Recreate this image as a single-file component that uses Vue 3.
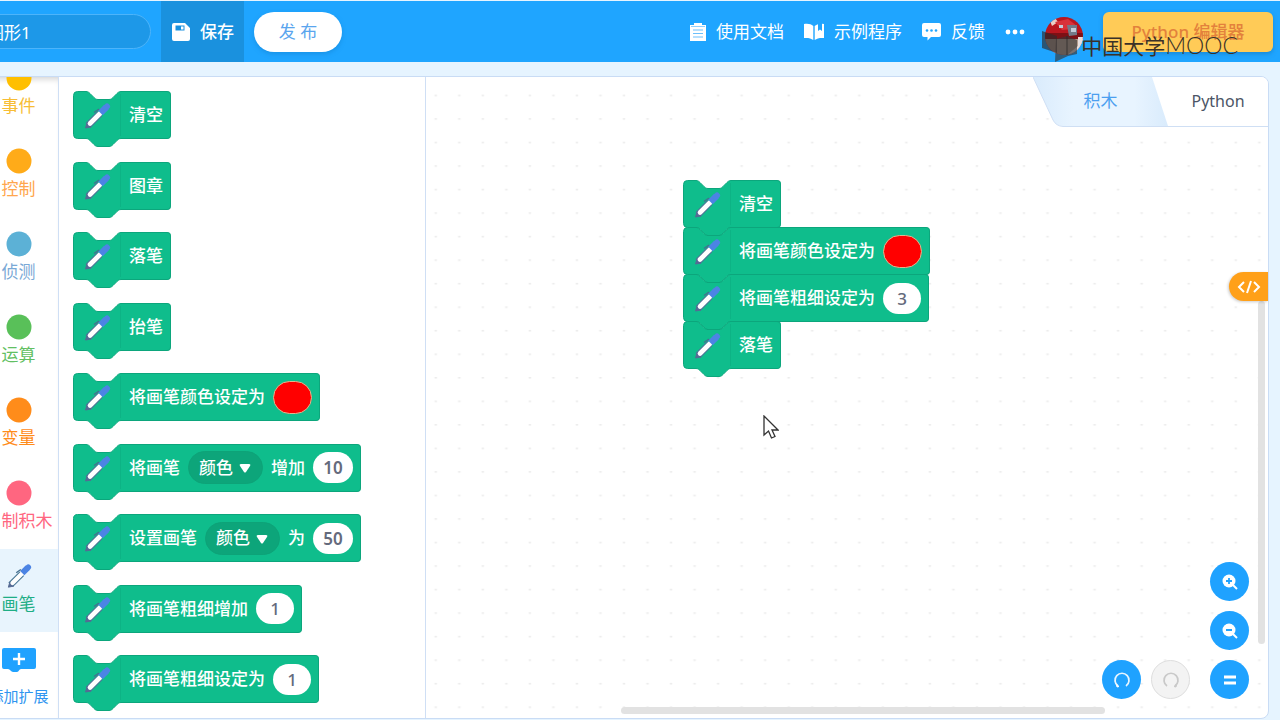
<script setup>
import { ref } from 'vue'

const projectName = ref('图形1')

const categories = [
  { name: '事件', color: '#ffbf00', text: '#f7bd35' },
  { name: '控制', color: '#ffab19', text: '#ffa64d' },
  { name: '侦测', color: '#5cb1d6', text: '#7aa9d6' },
  { name: '运算', color: '#59c059', text: '#62bf62' },
  { name: '变量', color: '#ff8c1a', text: '#ff8c1a' },
  { name: '自制积木', color: '#ff6680', text: '#ff6680' },
  { name: '画笔', pen: true, text: '#1fae86' }
]

const palette = [
  [{ t: '清空' }],
  [{ t: '图章' }],
  [{ t: '落笔' }],
  [{ t: '抬笔' }],
  [{ t: '将画笔颜色设定为' }, { color: '#ff0000' }],
  [{ t: '将画笔' }, { select: '颜色' }, { t: '增加' }, { n: '10' }],
  [{ t: '设置画笔' }, { select: '颜色' }, { t: '为' }, { n: '50' }],
  [{ t: '将画笔粗细增加' }, { n: '1' }],
  [{ t: '将画笔粗细设定为' }, { n: '1' }]
]

const script = [
  [{ t: '清空' }],
  [{ t: '将画笔颜色设定为' }, { color: '#ff0000' }],
  [{ t: '将画笔粗细设定为' }, { n: '3' }],
  [{ t: '落笔' }]
]

const groups = [
  { cls: 'palette', blocks: palette },
  { cls: 'stack', blocks: script }
]
</script>

<template>
  <div class="app">
    <svg class="defs" aria-hidden="true">
      <symbol id="pen" viewBox="0 0 28 28">
        <path d="M5 23.500 17 11.500" stroke="#4a7896" stroke-width="7" />
        <path d="m2.500 26 1.500-5 4 4z" fill="#566a94" stroke="#566a94" />
        <path d="M7 21.500 17 11.500" stroke="#fff" stroke-width="4.600" stroke-linecap="round" />
        <path d="M17.500 11 23.500 5" stroke="#4c84e4" stroke-width="6.500" />
        <path d="M22.500 6 24 4.500" stroke="#4c84e4" stroke-width="6" stroke-linecap="round" />
        <path d="m11 10.500 5-3.500" stroke="#45708f" stroke-width="1.500" />
      </symbol>
    </svg>

    <header class="bar">
      <input v-model="projectName" class="name" type="text" aria-label="项目名称" />
      <button class="save" type="button">
        <svg width="18" height="18" viewBox="0 0 18 18">
          <path fill-rule="evenodd" fill="#fff" d="M2 0h11l5 5v11a2 2 0 0 1-2 2H2a2 2 0 0 1-2-2V2a2 2 0 0 1 2-2zM3.500 2.500v5h9v-5zM9 3.500h2.500v3H9z" />
        </svg>
        <span>保存</span>
      </button>
      <button class="publish" type="button">发 布</button>
      <nav class="links">
        <a href="#docs">
          <svg width="16" height="18" viewBox="0 0 16 18">
            <path fill="#fff" d="M0 2h16v16H0zM4 0h8v3H4z" />
            <path d="M3 7h10M3 10.500h10M3 14h10" stroke="#6cc0fb" stroke-width="1.200" />
            <path d="M1 3.500h14" stroke="#8fd0ff" />
          </svg>
          <span>使用文档</span>
        </a>
        <a href="#examples">
          <svg width="20" height="18" viewBox="0 0 20 18">
            <path fill="#fff" d="M0 1c4-.8 7 0 9.300 2v14C7 15.200 4 14.700 0 15zM20 1v14c-4-.3-7 .2-9.300 2V3c1-.9 2-1.400 3.300-1.800V8l2-1.500L18 8V.8z" />
          </svg>
          <span>示例程序</span>
        </a>
        <a href="#feedback">
          <svg width="19" height="18" viewBox="0 0 19 18">
            <path fill="#fff" d="M2 0h15a2 2 0 0 1 2 2v10a2 2 0 0 1-2 2H9l-3.500 3.500V14H2a2 2 0 0 1-2-2V2a2 2 0 0 1 2-2z" />
            <g fill="#1fa5ff"><circle cx="5" cy="7.500" r="1.300" /><circle cx="9.500" cy="7.500" r="1.300" /><circle cx="14" cy="7.500" r="1.300" /></g>
          </svg>
          <span>反馈</span>
        </a>
      </nav>
      <button class="more" type="button" aria-label="更多">
        <svg width="20" height="6" viewBox="0 0 20 6" fill="#fff"><circle cx="3" cy="3" r="2.400" /><circle cx="10" cy="3" r="2.400" /><circle cx="17" cy="3" r="2.400" /></svg>
      </button>
      <svg class="avatar" width="38" height="38" viewBox="0 0 38 38" role="img" aria-label="头像">
        <clipPath id="face"><circle cx="19" cy="19" r="19" /></clipPath>
        <g clip-path="url(#face)">
          <path fill="#b9161f" d="M0 0h38v38H0z" />
          <path fill="#e9cfc8" d="M5 4l5-3 3 4-6 4zM34 18h4v20H24l8-8z" />
          <path fill="#7d1015" d="M0 16h38v6H0z" />
          <path fill="#d8323a" d="M10 5l13-3 9 7-5 3-10 1z" />
          <path fill="#737a88" d="M22 8h10v10l-8 1z" />
          <path fill="#c3ccd8" d="M26 11h5v4h-5zM14 8h4v3h-4z" />
          <path fill="#b09a8c" d="M0 22h36v16H0z" />
          <path fill="#e8dede" d="M33 20h5v18H22l11-9z" />
        </g>
      </svg>
      <button class="editor" type="button">Python 编辑器</button>

      <div class="watermark">
        <svg width="37" height="32" viewBox="0 0 37 32">
          <path d="M0 1l15 5v17L0 18z" fill="#2f2b2d" opacity=".65" />
          <path d="M14 9l11-3 10 4v14l-9 2-13 6z" fill="#3b3535" opacity=".65" />
          <path d="M25 6v19" stroke="#292526" opacity=".7" />
        </svg>
        <span>中国大学<b>MOOC</b></span>
      </div>
    </header>

    <main class="panel">
      <nav class="categories">
        <ul>
          <li v-for="c in categories" :key="c.name">
            <button class="category" :class="{ active: c.pen }" type="button" :style="{ color: c.text }">
              <svg v-if="c.pen" width="26" height="26"><use href="#pen" /></svg>
              <svg v-else width="26" height="26"><circle cx="13" cy="13" r="12.500" :fill="c.color" /></svg>
              <span>{{ c.name }}</span>
            </button>
          </li>
        </ul>
        <button class="extend" type="button">
          <svg width="34" height="24" viewBox="0 0 34 24">
            <path fill="#1fa2ff" d="M2 0h30a2 2 0 0 1 2 2v17a2 2 0 0 1-2 2H19c-2 0-2 3-4 3h-4c-2 0-3-3-5-3H2a2 2 0 0 1-2-2V2a2 2 0 0 1 2-2z" />
            <path d="M17 5v12M11 11h12" stroke="#fff" stroke-width="2.400" />
          </svg>
          <span>添加扩展</span>
        </button>
      </nav>

      <section v-for="g in groups" :key="g.cls" :class="g.cls + '-area'">
        <svg v-if="g.cls === 'stack'" class="dots" aria-hidden="true">
          <pattern id="grid" width="23.530" height="23.530" patternUnits="userSpaceOnUse">
            <path d="M8.500 18.500h2.500" stroke="#e2e2e2" />
          </pattern>
          <rect width="100%" height="100%" fill="url(#grid)" />
        </svg>
        <div :class="g.cls">
          <div v-for="(parts, i) in g.blocks" :key="i" class="block">
            <svg class="head" width="48" height="56" viewBox="0 0 48 56">
              <path d="M48 .5c-2 0-3 1-4 2l-4 4c-1 1-2 2-4 2H25c-2 0-3-1-4-2l-4-4c-1-1-2-2-4-2H4.500a4 4 0 0 0-4 4v39a4 4 0 0 0 4 4H13c2 0 3 1 4 2l4 4c1 1 2 2 4 2h11c2 0 3-1 4-2l4-4c1-1 2-2 4-2" fill="#0fbd8c" stroke="#0ca67c" />
              <path d="M47.500 3v42" stroke="#0db385" />
              <use href="#pen" x="10" y="11" width="28" height="28" />
            </svg>
            <div class="body">
              <template v-for="(p, k) in parts" :key="k">
                <span v-if="p.t">{{ p.t }}</span>
                <button v-else-if="p.color" class="swatch" type="button" aria-label="画笔颜色" :style="{ background: p.color }"></button>
                <span v-else-if="p.select" class="drop">
                  <select aria-label="画笔属性"><option>{{ p.select }}</option></select>
                  <svg width="12" height="10" viewBox="0 0 12 10"><path d="M2 1h8q2 0 1 2L7 9Q6 10 5 9L1 3Q0 1 2 1z" fill="#fff" /></svg>
                </span>
                <input v-else class="num" :class="{ wide: p.n.length > 1 }" type="text" :value="p.n" aria-label="数值" />
              </template>
            </div>
          </div>
        </div>

        <template v-if="g.cls === 'stack'">
          <div class="tabs">
            <svg width="136" height="50" viewBox="0 0 136 50" aria-hidden="true">
              <defs>
                <linearGradient id="tabfill"><stop offset="0" stop-color="#d9ebfc" /><stop offset=".3" stop-color="#e8f4ff" /><stop offset=".75" stop-color="#e8f4ff" /><stop offset="1" stop-color="#d9ebfc" /></linearGradient>
              </defs>
              <path d="M0 0h119l16 49H30q-7 0-10-6z" fill="url(#tabfill)" />
              <path d="M0 0l20 43q3 6 10 6.500h106" fill="none" stroke="#cfdff4" />
            </svg>
            <button class="tab on" type="button">积木</button>
            <button class="tab" type="button">Python</button>
          </div>
          <div class="vbar"></div>
          <div class="hbar"></div>
          <button class="code" type="button" aria-label="代码">
            <svg width="24" height="14" viewBox="0 0 24 14" fill="none" stroke="#fff" stroke-width="2"><path d="M7 2 2 7l5 5M17 2l5 5-5 5M14 1l-4 12" /></svg>
          </button>
          <div class="tools">
            <button class="round zin" type="button" aria-label="放大">
              <svg width="18" height="18" viewBox="0 0 18 18"><path d="m11 11 5 5" stroke="#fff" stroke-width="2" /><circle cx="8" cy="8" r="6.500" fill="#fff" /><path d="M8 5v6M5 8h6" stroke="#1fa2ff" stroke-width="1.800" /></svg>
            </button>
            <button class="round zout" type="button" aria-label="缩小">
              <svg width="18" height="18" viewBox="0 0 18 18"><path d="m11 11 5 5" stroke="#fff" stroke-width="2" /><circle cx="8" cy="8" r="6.500" fill="#fff" /><path d="M5 8h6" stroke="#1fa2ff" stroke-width="1.800" /></svg>
            </button>
            <button class="round undo" type="button" aria-label="撤销">
              <svg width="18" height="18" viewBox="0 0 18 18"><path d="M5 15A7 7 0 1 1 13 15" fill="none" stroke="#e6f5ff" stroke-width="1.700" /><path d="M3.500 13.500 6 15.500l-2 .5z" fill="#fff" stroke="#fff" /></svg>
            </button>
            <button class="round redo" type="button" aria-label="重做" disabled>
              <svg width="18" height="18" viewBox="0 0 18 18"><path d="M5 15A7 7 0 1 1 13 15" fill="none" stroke="#c9c9c9" stroke-width="1.700" /><path d="M14.500 13.500 12 15.500l2 .5z" fill="#c9c9c9" stroke="#c9c9c9" /></svg>
            </button>
            <button class="round reset" type="button" aria-label="重置缩放">
              <svg width="18" height="18" viewBox="0 0 18 18"><path d="M3 6h12M3 12h12" stroke="#fff" stroke-width="3" /></svg>
            </button>
          </div>
          <svg class="cursor" width="16" height="25" viewBox="0 0 16 25" aria-hidden="true"><path d="M1 1v19l4.500-4 3 7 3.500-1.500-3-6.500H15z" fill="#fff" stroke="#333" stroke-width="1.300" /></svg>
        </template>
      </section>
    </main>
  </div>
</template>

<style>
html, body { margin: 0; height: 100%; overflow: hidden; }
</style>

<style scoped>
* { box-sizing: border-box; }
.app { display: flex; flex-direction: column; height: 100vh; padding-top: 1px; background: #e6f4ff; font-family: "Noto Sans", "Noto Sans CJK SC", sans-serif; font-size: 17px; line-height: 24px; overflow: hidden; }
.defs { position: absolute; width: 0; height: 0; }
button, input, select { font: inherit; border: 0; margin: 0; padding: 0; background: none; color: inherit; }
svg { flex: none; display: block; }

.bar { position: relative; display: flex; align-items: center; height: 61px; flex: none; margin-left: -22px; padding-right: 7px; background: #1fa5ff; color: #fff; }
.name { width: 173px; height: 35px; padding: 0 8px; border: 1px solid #4db4fa; border-radius: 18px; background: #1d98e8; outline: none; }
.save { display: flex; align-items: center; gap: 10px; align-self: stretch; margin: 0 10px; padding: 0 10px 0 11px; background: #1a91de; font-weight: 500; }
.publish { width: 88px; height: 40px; border-radius: 20px; background: #fff; color: #5aa5ee; box-shadow: 0 2px 4px #1482d080; }
.links { display: flex; gap: 20px; margin-left: auto; }
.links a { display: flex; align-items: center; gap: 10px; color: #fff; text-decoration: none; }
.more { margin: 0 20px; }
.avatar { margin-top: 8px; }
.editor { width: 170px; height: 40px; margin-left: 20px; border-radius: 6px; background: #ffcb57; color: #e3813c; font-weight: 500; box-shadow: 0 2px 4px #1670b080; }
.watermark { position: absolute; right: 42px; top: 28px; display: flex; align-items: center; gap: 2px; font-size: 21px; line-height: 32px; color: #3a3128; white-space: nowrap; }
.watermark b { font-family: Lato, sans-serif; font-weight: 300; font-size: 23px; }

.panel { display: flex; flex: 1; min-height: 0; margin: 14px 11px 1px -22px; border: 1px solid #c9dcf5; border-radius: 0 8px 8px 0; background: #fff; overflow: hidden; }
.categories { width: 80px; flex: none; border-right: 1px solid #cfdff5; box-shadow: inset 0 6px 6px -4px #0000002e; overflow: hidden; }
.categories ul { list-style: none; margin: -26px 0 0; padding: 0; }
.category, .extend { display: flex; flex-direction: column; align-items: center; width: 100%; white-space: nowrap; }
.category { height: 83px; padding-top: 14px; gap: 3px; }
.category.active { background: #e8f4fd; }
.extend { padding-top: 16px; gap: 12px; font-size: 15px; color: #2f95f0; }

.palette-area { width: 367px; flex: none; border-right: 1px solid #cfdff5; }
.palette { display: flex; flex-direction: column; justify-content: space-between; align-items: flex-start; height: 100%; padding: 14px 14px 7px; }
.block { display: flex; align-items: flex-start; color: #fff; }
.body { display: flex; align-items: center; gap: 8px; height: 48px; padding: 0 7px 0 8px; border: 1px solid #0ca67c; border-left: 0; border-radius: 0 4px 4px 0; background: #0fbd8c; white-space: nowrap; font-weight: 500; }
.swatch { width: 39px; height: 33px; border: 1px solid #e0b890; border-radius: 17px; }
.num { width: 38px; height: 31px; border-radius: 16px; background: #fff; color: #646a7c; text-align: center; outline: none; }
.num.wide { width: 40px; font-weight: 600; }
.drop { position: relative; display: flex; }
.drop select { width: 75px; height: 33px; padding-left: 10px; appearance: none; border: 1px solid #0da378; border-radius: 17px; background: #0da57a; outline: none; }
.drop svg { position: absolute; right: 12px; top: 12px; pointer-events: none; }

.stack-area { position: relative; flex: 1; min-width: 0; }
.dots { position: absolute; inset: 0; width: 100%; height: 100%; }
.stack { position: absolute; left: 257px; top: 103px; }
.stack .block { height: 47px; }
.tabs { position: absolute; right: 0; top: 0; display: flex; width: 235px; height: 50px; background: linear-gradient(#fff, #fff) right / 110px 100% no-repeat; }
.tabs::after { content: ""; position: absolute; right: 0; bottom: 0; width: 102px; height: 1px; background: #cfdff4; }
.tabs svg { position: absolute; left: 0; top: 0; }
.tab { position: relative; flex: 1; padding-bottom: 2px; font-size: 16px; color: #4c5566; }
.tab.on { flex: none; width: 135px; font-size: 17px; color: #4c9ff0; }
.vbar { position: absolute; right: 3px; top: 224px; bottom: 74px; width: 7px; border-radius: 4px; background: #e2e2e2; }
.hbar { position: absolute; left: 195px; right: 163px; bottom: 4px; height: 7px; border-radius: 4px; background: #e2e2e2; }
.code { position: absolute; right: 0; top: 195px; display: flex; align-items: center; justify-content: center; width: 39px; height: 29px; border-radius: 15px 0 0 15px; background: #ffa019; box-shadow: -1px 1px 3px #0003; }
.tools { position: absolute; right: 19px; bottom: 19px; display: grid; grid-template-columns: 39px 49px 39px; gap: 10px; }
.round { display: flex; align-items: center; justify-content: center; width: 39px; height: 39px; border-radius: 50%; background: #1fa2ff; }
.zin, .zout { grid-column: 3; }
.undo { grid-column: 1; }
.redo { background: #f3f3f3; border: 1px solid #dedede; }
.cursor { position: absolute; left: 337px; top: 338px; }
</style>
